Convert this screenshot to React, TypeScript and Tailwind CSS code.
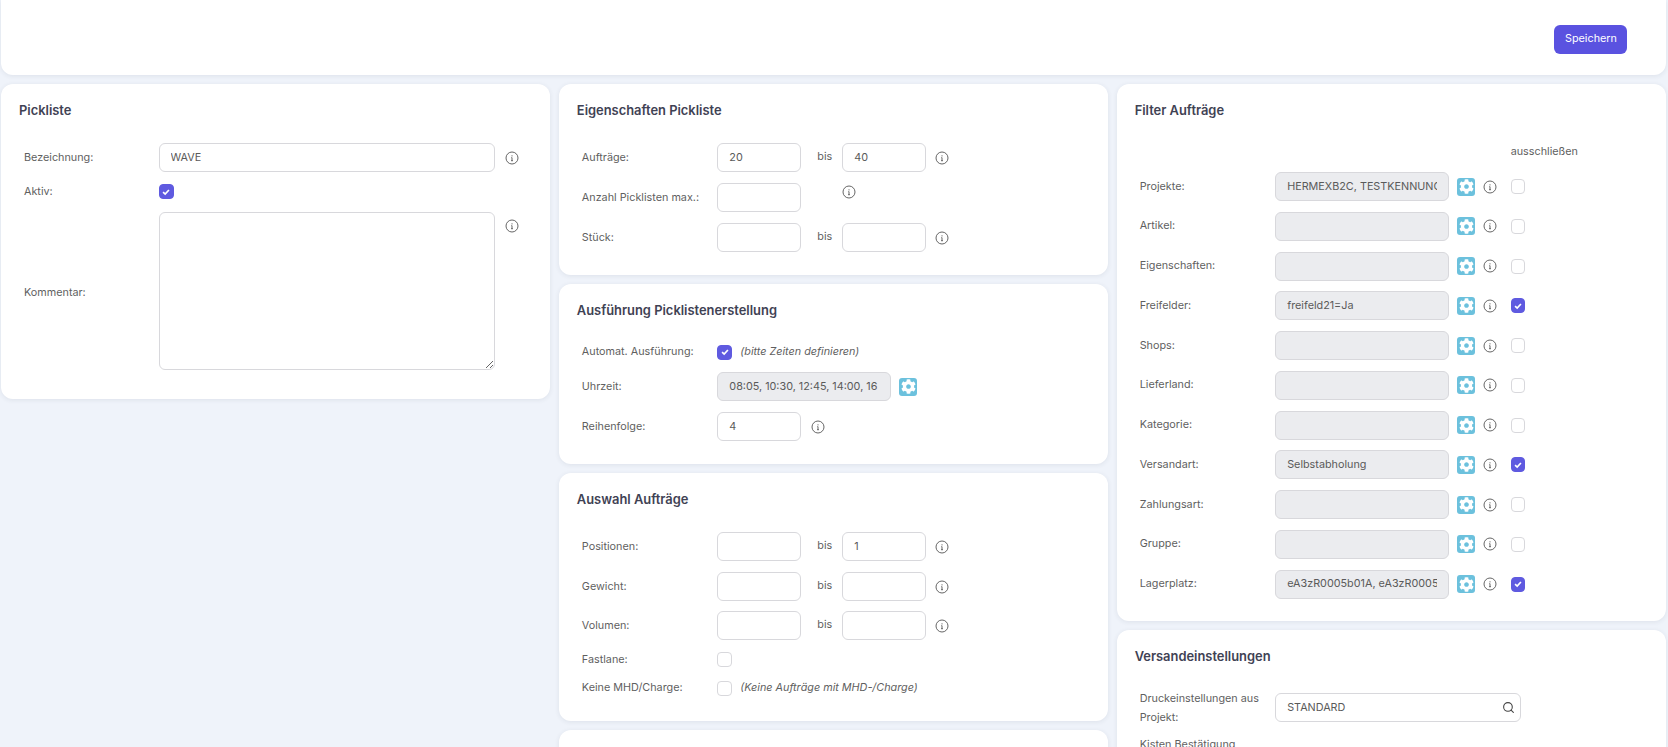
import type { ReactNode } from "react";
import { FaCog } from "react-icons/fa";
import { Search } from "lucide-react";

function Card({ title, className = "", children }: { title?: string; className?: string; children?: ReactNode }) {
  return (
    <section className={`bg-white rounded-xl shadow-[0_1px_5px_rgba(40,50,80,0.09)] px-[18px] pt-[18px] ${className}`}>
      {title && <h2 className="text-[12.9px] leading-[18px] font-semibold text-[#3f4254] mb-[23px]">{title}</h2>}
      {children}
    </section>
  );
}

function Row({ label, className = "", labelWidth = "w-[140.5px]", children }: { label: string; className?: string; labelWidth?: string; children?: ReactNode }) {
  return (
    <div className={`flex items-center ${className}`}>
      <label className={`shrink-0 pl-[5px] pr-2 leading-[18px] ${labelWidth}`}>{label}</label>
      {children}
    </div>
  );
}

function Field({ value = "", className = "w-[84px]", gray = false }: { value?: string; className?: string; gray?: boolean }) {
  return (
    <input
      readOnly
      value={value}
      className={`h-[29px] px-[11px] pb-px border border-[#d8d8dc] rounded-[6px] text-[10.8px] text-[#5a5a5a] outline-none ${gray ? "bg-[#ebecef]" : "bg-white"} ${className}`}
    />
  );
}

function Info({ className = "" }: { className?: string }) {
  return (
    <svg viewBox="0 0 14 14" className={`w-[14px] h-[14px] shrink-0 text-[#555] ${className}`} fill="none" stroke="currentColor">
      <circle cx="7" cy="7" r="6" strokeWidth="0.9" />
      <path d="M6.4 6.6H7V9.4M6 9.7H8" strokeWidth="0.9" />
      <circle cx="7" cy="4.8" r="0.6" fill="currentColor" stroke="none" />
    </svg>
  );
}

function Gear({ className = "" }: { className?: string }) {
  return (
    <span className={`w-[18px] h-[18px] shrink-0 rounded-[3px] bg-[#6cc1dd] flex items-center justify-center text-white ${className}`}>
      <FaCog className="w-[15px] h-[15px]" />
    </span>
  );
}

function Check({ checked = false, small = false, className = "" }: { checked?: boolean; small?: boolean; className?: string }) {
  return (
    <span
      className={`shrink-0 rounded-[4px] flex items-center justify-center border ${small ? "w-[14px] h-[15px]" : "w-[15px] h-[15px]"} ${
        checked ? "bg-[#5f5ae0] border-[#5f5ae0]" : "bg-white border-[#d8d8dc]"
      } ${className}`}
    >
      {checked && (
        <svg viewBox="0 0 12 12" className="w-[10px] h-[10px]" fill="none" stroke="white" strokeWidth="2">
          <path d="M2.5 6.2 5 8.6 9.5 3.6" />
        </svg>
      )}
    </span>
  );
}

function Range({ from = "", to = "" }: { from?: string; to?: string }) {
  return (
    <>
      <Field value={from} />
      <span className="w-[41px] pl-[16px]">bis</span>
      <Field value={to} />
      <Info className="ml-[9px]" />
    </>
  );
}

const filters: { label: string; value?: string; excluded?: boolean }[] = [
  { label: "Projekte:", value: "HERMEXB2C, TESTKENNUNG" },
  { label: "Artikel:" },
  { label: "Eigenschaften:" },
  { label: "Freifelder:", value: "freifeld21=Ja", excluded: true },
  { label: "Shops:" },
  { label: "Lieferland:" },
  { label: "Kategorie:" },
  { label: "Versandart:", value: "Selbstabholung", excluded: true },
  { label: "Zahlungsart:" },
  { label: "Gruppe:" },
  { label: "Lagerplatz:", value: "eA3zR0005b01A, eA3zR0005b02A", excluded: true },
];

export default function App() {
  return (
    <div className="h-screen overflow-hidden bg-[#eff3fa] pl-px pr-[2px] text-[10.8px] text-[#5f5f5f] font-['Inter',sans-serif]">
      <header className="h-[75px] bg-white rounded-b-xl shadow-[0_1px_5px_rgba(40,50,80,0.09)] flex items-end justify-end pr-[39px] pb-[21px]">
        <button className="w-[73px] h-[29px] pl-px rounded-[6px] bg-[#5a52e0] text-white text-[10.8px]">Speichern</button>
      </header>

      <div className="grid grid-cols-3 gap-x-[8.5px] mt-[9px]">
        <div>
          <Card title="Pickliste" className="pb-[29px]">
            <Row label="Bezeichnung:" labelWidth="w-[139.5px]">
              <Field value="WAVE" className="w-[336px]" />
              <Info className="ml-[10px]" />
            </Row>
            <Row label="Aktiv:" labelWidth="w-[139.5px]" className="mt-[10.5px]">
              <Check checked />
            </Row>
            <Row label="Kommentar:" labelWidth="w-[139.5px] pt-[3px]" className="mt-[11.5px]">
              <textarea readOnly className="w-[336px] h-[158px] border border-[#d8d8dc] rounded-[6px] outline-none" />
              <Info className="ml-[10px] self-start mt-[7px]" />
            </Row>
          </Card>
        </div>

        <div className="flex flex-col gap-[9px]">
          <Card title="Eigenschaften Pickliste" className="pb-[23px]">
            <Row label="Aufträge:">
              <Range from="20" to="40" />
            </Row>
            <Row label="Anzahl Picklisten max.:" className="mt-[11px]">
              <Field />
              <Info className="ml-[41px] -mt-[11px]" />
            </Row>
            <Row label="Stück:" className="mt-[11px]">
              <Range />
            </Row>
          </Card>

          <Card title="Ausführung Picklistenerstellung" className="pb-[23px]">
            <Row label="Automat. Ausführung:" className="h-[18px]">
              <Check checked />
              <i className="ml-[8px]">(bitte Zeiten definieren)</i>
            </Row>
            <Row label="Uhrzeit:" className="mt-[11px]">
              <Field value="08:05, 10:30, 12:45, 14:00, 16" className="w-[174px]" gray />
              <Gear className="ml-[8px]" />
            </Row>
            <Row label="Reihenfolge:" className="mt-[11px]">
              <Field value="4" />
              <Info className="ml-[10px]" />
            </Row>
          </Card>

          <Card title="Auswahl Aufträge" className="pb-[24px]">
            <Row label="Positionen:">
              <Range to="1" />
            </Row>
            <Row label="Gewicht:" className="mt-[11px]">
              <Range />
            </Row>
            <Row label="Volumen:" className="mt-[10px]">
              <Range />
            </Row>
            <Row label="Fastlane:" className="mt-[10.5px]">
              <Check />
            </Row>
            <Row label="Keine MHD/Charge:" className="mt-[10.5px]">
              <Check />
              <i className="ml-[8px]">(Keine Aufträge mit MHD-/Charge)</i>
            </Row>
          </Card>

          <Card className="h-[80px]" />
        </div>

        <div className="flex flex-col gap-[9px]">
          <Card title="Filter Aufträge" className="pb-[22px]">
            <div className="h-[29px] -mt-[5px] mb-[5px] flex items-center pl-[376px]">ausschließen</div>
            {filters.map((f) => (
              <Row key={f.label} label={f.label} className="mb-[10.75px] last:mb-0">
                <Field value={f.value} className="w-[174px]" gray />
                <Gear className="ml-[8px]" />
                <Info className="ml-[8px]" />
                <Check small checked={f.excluded} className="ml-[13.5px]" />
              </Row>
            ))}
          </Card>

          <Card title="Versandeinstellungen" className="pb-[24px]">
            <Row label="Druckeinstellungen aus Projekt:" className="[&>label]:leading-[19px]">
              <div className="relative">
                <Field value="STANDARD" className="w-[246px]" />
                <Search className="absolute right-[6px] top-[8px] w-[13px] h-[13px] text-[#444]" />
              </div>
            </Row>
            <Row label="Kisten Bestätigung" className="mt-[9px]" />
          </Card>
        </div>
      </div>
    </div>
  );
}
